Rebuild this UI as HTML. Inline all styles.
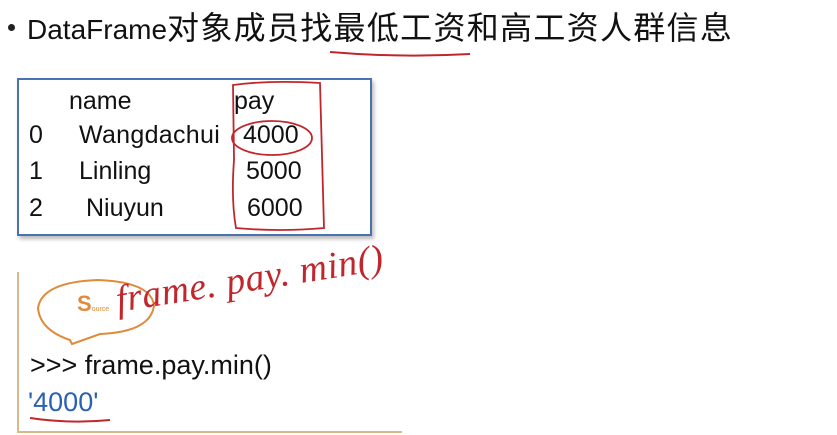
<!DOCTYPE html>
<html><head><meta charset="utf-8"><style>
body{margin:0;width:837px;height:435px;background:#fff;position:relative;overflow:hidden;font-family:"Liberation Sans","Noto Sans CJK SC",sans-serif;color:#111}
.a{position:absolute;white-space:nowrap}
</style></head><body>
<div class="a" style="left:8px;top:24px;width:7px;height:7px;background:#222;border-radius:50%"></div>
<div class="a" style="left:27px;top:6px;font-size:28px;line-height:44px">DataFrame<span style="font-size:32px;letter-spacing:1.3px">对象成员找最低工资和高工资人群信息</span></div>
<div class="a" style="left:17px;top:78px;width:351px;height:154px;border:2px solid #4a72b0;box-shadow:2px 3px 4px #bbb"></div>
<div class="a" style="left:69px;top:87px;font-size:25px">name</div>
<div class="a" style="left:234px;top:87px;font-size:25px">pay</div>
<div class="a" style="left:29px;top:121px;font-size:25px">0</div>
<div class="a" style="left:79px;top:121px;font-size:25px;letter-spacing:0.3px">Wangdachui</div>
<div class="a" style="left:243px;top:121px;font-size:25px">4000</div>
<div class="a" style="left:29px;top:157px;font-size:25px">1</div>
<div class="a" style="left:79px;top:157px;font-size:25px">Linling</div>
<div class="a" style="left:246px;top:157px;font-size:25px">5000</div>
<div class="a" style="left:29px;top:194px;font-size:25px">2</div>
<div class="a" style="left:86px;top:194px;font-size:25px">Niuyun</div>
<div class="a" style="left:247px;top:194px;font-size:25px">6000</div>
<div class="a" style="left:17px;top:272px;width:2px;height:160px;background:#d9b88a"></div>
<div class="a" style="left:17px;top:431px;width:385px;height:2px;background:#d9b88a"></div>
<div class="a" style="left:30px;top:350px;font-size:27px">&gt;&gt;&gt; frame.pay.min()</div>
<div class="a" style="left:28px;top:387px;font-size:27px;color:#2a62b0">'4000'</div>
<div class="a" style="left:77px;top:291px;font-size:22px;font-weight:bold;color:#e08a3a">S<span style="font-size:7px;font-weight:normal">ource</span></div>
<svg class="a" style="left:0;top:0" width="837" height="435">
<path d="M330 52 Q400 58 470 54" stroke="#c0272d" stroke-width="2" fill="none"/>
<path d="M233 85 Q270 80 320 83 L324 228 Q280 232 236 228 Q231 200 234 160 Z" stroke="#c0272d" stroke-width="1.8" fill="none"/>
<ellipse cx="272" cy="138" rx="40" ry="17" stroke="#c0272d" stroke-width="1.8" fill="none"/>
<path d="M70 340 Q40 330 38 308 Q42 282 98 280 Q152 282 154 306 Q150 332 100 334 L72 344 Z" stroke="#e08a3a" stroke-width="2" fill="none"/>
<text x="118" y="312" font-family="Liberation Serif,serif" font-style="italic" font-size="38" fill="#c0272d" transform="rotate(-9 118 312)" textLength="270">frame. pay. min()</text>
<path d="M30 418 Q70 424 110 420" stroke="#c0272d" stroke-width="2" fill="none"/>
</svg>
</body></html>
